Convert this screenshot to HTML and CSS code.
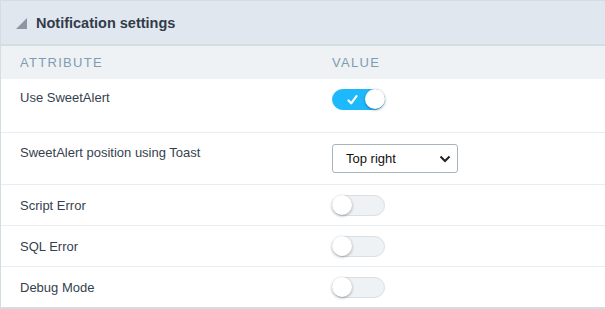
FILE: index.html
```html
<!DOCTYPE html>
<html lang="en">
<head>
  <meta charset="UTF-8" />
  <meta name="viewport" content="width=device-width, initial-scale=1.0" />
  <title>Notification settings</title>
  <link rel="stylesheet" href="styles.css">
</head>
<body>
  <div class="panel">
    <div class="panel-header">
      <span class="caret"></span>
      <h1>Notification settings</h1>
    </div>

    <div class="row head">
      <div class="attr">Attribute</div>
      <div class="value">Value</div>
    </div>

    <div class="row tall">
      <div class="attr">Use SweetAlert</div>
      <div class="value">
        <span class="switch on">
          <svg class="check" width="11" height="10" viewBox="0 0 11 10"><path d="M1.5 5.5 L4.2 8.3 L9.5 1.2" fill="none" stroke="#fff" stroke-width="2.2" stroke-linecap="round" stroke-linejoin="round"/></svg>
          <span class="knob"></span>
        </span>
      </div>
    </div>

    <div class="row mid">
      <div class="attr">SweetAlert position using Toast</div>
      <div class="value">
        <div class="select">
          <span>Top right</span>
          <svg width="12" height="8" viewBox="0 0 12 8"><path d="M1.5 1.5 L6 6 L10.5 1.5" fill="none" stroke="#222" stroke-width="2"/></svg>
        </div>
      </div>
    </div>

    <div class="row">
      <div class="attr">Script Error</div>
      <div class="value"><span class="switch"><span class="knob"></span></span></div>
    </div>

    <div class="row">
      <div class="attr">SQL Error</div>
      <div class="value"><span class="switch"><span class="knob"></span></span></div>
    </div>

    <div class="row last">
      <div class="attr">Debug Mode</div>
      <div class="value"><span class="switch"><span class="knob"></span></span></div>
    </div>
  </div>
</body>
</html>
```

FILE: styles.css
```css
/* Painel de configurações */
body {
  margin: 0;
  font-family: "Liberation Sans", Arial, sans-serif;
  background: #fff;
  color: #333;
}

.panel {
  width: 620px;
  border-top: 1px solid #d3dde3;
  border-left: 1px solid #d3dde3;
  border-bottom: 3px solid #d3dde3;
}

/* Cabeçalho */
.panel-header {
  display: flex;
  align-items: center;
  height: 43px;
  background: #e1e7ee;
  border-bottom: 2px solid #d3dde3;
  padding-left: 15px;
}
.caret {
  width: 0;
  height: 0;
  border-left: 11px solid transparent;
  border-bottom: 11px solid #8b97a3;
  margin-right: 9px;
  margin-top: 1px;
}
.panel-header h1 {
  margin: 0;
  font-size: 14.5px;
  font-weight: bold;
  color: #323b4a;
}

/* Linhas */
.row {
  display: flex;
  align-items: center;
  box-sizing: border-box;
  height: 41px;
  border-bottom: 1px solid #e8edf2;
  font-size: 13px;
  color: #363f4e;
}
.row .attr {
  width: 312px;
  padding-left: 19px;
}
.row.head {
  height: 33px;
  background: #eef2f5;
  border-bottom: none;
  color: #7f9cb0;
  text-transform: uppercase;
  letter-spacing: 1.3px;
}
.row.tall {
  height: 54px;
  align-items: flex-start;
}
.row.tall .attr {
  padding-top: 11px;
}
.row.tall .value {
  padding-top: 10px;
}
.row.mid {
  height: 52px;
  align-items: flex-start;
}
.row.mid .attr {
  padding-top: 12px;
}
.row.mid .value {
  padding-top: 11px;
}
.row.last {
  height: 40px;
  border-bottom: none;
}

/* Interruptor */
.switch {
  position: relative;
  display: block;
  width: 51px;
  height: 19px;
  border-radius: 11px;
  background: #eef2f5;
  border: 1px solid #d6e0e6;
}
.switch .knob {
  position: absolute;
  left: -1px;
  top: -1px;
  width: 20px;
  height: 20px;
  border-radius: 50%;
  background: #fff;
  box-shadow: 0 1px 3px rgba(0, 0, 0, 0.35);
}
.switch.on {
  background: #1eb9fc;
  border-color: #1eb9fc;
}
.switch.on .knob {
  left: auto;
  right: -1px;
}
.switch .check {
  position: absolute;
  left: 14px;
  top: 5px;
}

/* Seleção */
.select {
  display: flex;
  align-items: center;
  justify-content: space-between;
  box-sizing: border-box;
  width: 126px;
  height: 29px;
  border: 1px solid #a9b3bd;
  border-radius: 3px;
  padding: 0 6px 0 13px;
  color: #111;
  font-size: 13px;
}
```
